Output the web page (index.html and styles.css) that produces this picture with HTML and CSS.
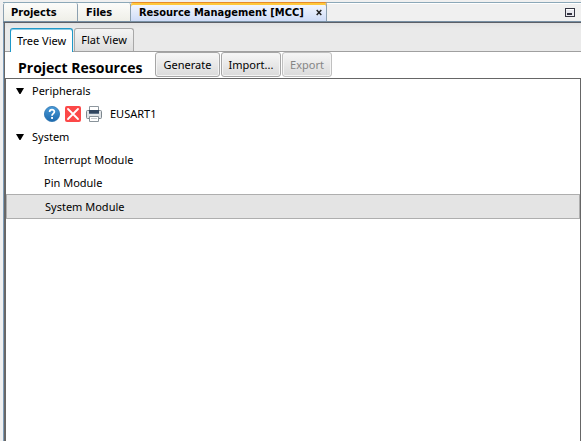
FILE: index.html
```html
<!DOCTYPE html>
<html lang="en">
<head>
<meta charset="utf-8">
<title>Resource Management [MCC]</title>
<link rel="stylesheet" href="styles.css">
</head>
<body>
<div class="window">
  <header class="dock">
    <nav class="dock-tabs">
      <button class="dock-tab projects">Projects</button>
      <button class="dock-tab files">Files</button>
      <div class="dock-tab active">
        <button class="dock-label">Resource Management [MCC]</button>
        <button class="close" aria-label="Close"><svg width="6" height="7" viewBox="0 0 6 7"><path d="M.7 1l4.6 5M5.3 1L.7 6" stroke="#222" stroke-width="1.5"/></svg></button>
      </div>
    </nav>
    <button class="minimize" aria-label="Minimize"><svg width="10" height="9" viewBox="0 0 10 9"><rect x=".5" y=".5" width="9" height="8" fill="#e9e9ef" stroke="#343441"/><path d="M1 1.5h8" stroke="#fff"/><path d="M2 6h5" stroke="#343441" stroke-width="2"/></svg></button>
  </header>
  <main class="panel">
    <nav class="views">
      <button class="view selected">Tree View</button>
      <button class="view">Flat View</button>
    </nav>
    <div class="toolbar">
      <h1>Project Resources</h1>
      <button class="action generate">Generate</button>
      <button class="action import">Import...</button>
      <button class="action export" disabled>Export</button>
    </div>
    <div class="tree">
      <div class="row group"><svg class="arrow" width="8" height="6" viewBox="0 0 8 6"><path d="M0 0h8L4.5 6h-1z"/></svg>Peripherals</div>
      <div class="row item">
        <button class="icon" aria-label="Help"><svg width="16" height="16" viewBox="0 0 16 16"><defs><linearGradient id="help" x2="0" y2="1"><stop stop-color="#4a9bd8"/><stop offset="1" stop-color="#1c69ad"/></linearGradient></defs><circle cx="8" cy="8" r="7.6" fill="url(#help)" stroke="#2a72b0" stroke-width=".8"/><path d="M5.6 6.1C5.6 2.9 10.4 3 10.4 5.8 10.4 7.6 8 7.7 8 9.7" fill="none" stroke="#fff" stroke-width="1.7"/><rect x="7.1" y="11" width="1.9" height="1.9" fill="#fff"/></svg></button>
        <button class="icon" aria-label="Remove"><svg width="16" height="16" viewBox="0 0 16 16"><rect width="16" height="16" rx="2" fill="#fc4848"/><path d="M3 3l10 10M13 3L3 13" stroke="#fff" stroke-width="1.8" stroke-linecap="round"/></svg></button>
        <button class="icon" aria-label="Print"><svg width="16" height="16" viewBox="0 0 16 16"><path d="M3.5 5V.5h9V5" fill="#fff" stroke="#8e979e"/><rect x=".5" y="4.5" width="15" height="8" rx="1" fill="#e0e4e7" stroke="#7d878e"/><path d="M3 4h10v4H3z" fill="#30455f"/><path d="M3 7h10v1H3z" fill="#5d7187"/><path d="M3.5 10.5h9v5h-9z" fill="#fff" stroke="#89939a"/><path d="M5 12.5h6" stroke="#c8cdd1"/></svg></button>
        <span class="name">EUSART1</span>
      </div>
      <div class="row group"><svg class="arrow" width="8" height="6" viewBox="0 0 8 6"><path d="M0 0h8L4.5 6h-1z"/></svg>System</div>
      <div class="row item">Interrupt Module</div>
      <div class="row item">Pin Module</div>
      <div class="row item current">System Module</div>
    </div>
  </main>
</div>
</body>
</html>
```
FILE: styles.css
```css
* { box-sizing: border-box; }
body {
  margin: 0;
  background: #f0f0f0;
  color: #000;
  font: 11px/16px "Noto Sans", "Open Sans", sans-serif;
}
button {
  margin: 0;
  padding: 0;
  border: 0;
  background: none;
  color: inherit;
  font: inherit;
  white-space: nowrap;
}
svg { display: block; }
.window {
  display: flex;
  flex-direction: column;
  min-height: 100vh;
  padding: 2px 0 0 3px;
}
.dock {
  display: flex;
  align-items: center;
  justify-content: space-between;
  border-top: 1px solid #8ca8b8;
  border-bottom: 1px solid #7890a4;
  background: #f0f0f0;
  box-shadow: inset 0 1px #fff;
}
.dock-tabs { display: flex; }
.dock-tab {
  height: 18px;
  padding: 1px 7px 0 8px;
  border-right: 1px solid #8ca0b0;
  border-radius: 2px 2px 0 0;
  background: linear-gradient(#fcfcfa, #efefe8);
  font: bold 11px/18px "DejaVu Sans Condensed", "DejaVu Sans", sans-serif;
  text-align: left;
}
.projects { width: 75px; border-left: 1px solid #8ca0b0; padding-left: 7px; }
.files { width: 53px; }
.active {
  display: flex;
  align-items: center;
  justify-content: space-between;
  width: 196px;
  padding-right: 4px;
  background: linear-gradient(#f6f9ff, #cfdcf7);
  box-shadow: inset 0 2px #ffc83c, 0 -1px #e68b2c;
}
.minimize { margin-right: 6px; }
.panel {
  flex: 1;
  display: flex;
  flex-direction: column;
  border-top: 1px solid #5c6068;
  border-left: 1px solid #7f9db9;
  padding-left: 1px;
  background: #686868;
}
.views {
  display: flex;
  align-items: flex-end;
  gap: 1px;
  height: 29px;
  padding: 5px 5px 0;
  border-bottom: 1px solid #a0a0a0;
  background: linear-gradient(#e2e2e2, #eaeaea 5px);
}
.view {
  width: 60px;
  height: 23px;
  border: 1px solid #a8a8a8;
  border-bottom: 0;
  border-radius: 3px 3px 0 0;
  background: linear-gradient(#f4f4f4, #dedede);
}
.view.selected {
  width: 63px;
  height: 24px;
  margin-bottom: -1px;
  border-color: #1e98c8;
  background: #fff;
  box-shadow: inset 0 1px #8fcce4;
}
.toolbar {
  display: flex;
  height: 26px;
  gap: 1px;
  background: #fff;
}
h1 {
  width: 149px;
  margin: 0;
  padding: 6px 0 0 13px;
  font: bold 14px/20px "Open Sans", "Noto Sans", sans-serif;
  white-space: nowrap;
}
.action {
  height: 25px;
  border: 1px solid #a6a6a6;
  border-radius: 3px;
  background: linear-gradient(#f6f6f6, #dadada);
  box-shadow: inset 0 0 0 1px #f4f4f4;
}
.generate { width: 65px; }
.import { width: 60px; }
.export { width: 50px; }
.action:disabled { border-color: #c0c0c0; color: #858585; }
.tree {
  flex: 1;
  border: 1px solid #666;
  border-bottom: 0;
  background: #fff;
}
.row { display: flex; align-items: center; height: 23px; }
.group { padding-left: 10px; }
.arrow { margin-right: 8px; }
.item { padding-left: 38px; }
.icon { margin-right: 5px; }
.name { margin-left: 3px; }
.current {
  height: 25px;
  border: 1px solid #aeaeae;
  background: #e4e4e4;
}
```
